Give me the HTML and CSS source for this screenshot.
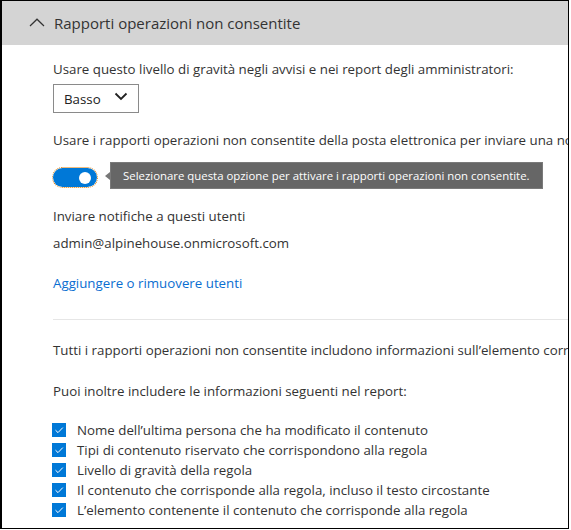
FILE: index.html
```html
<!DOCTYPE html>
<html lang="it">
<head>
<meta charset="utf-8">
<link rel="stylesheet" href="styles.css">
</head>
<body>
<div class="frame">
  <div class="header">
    <svg class="chev-up" width="16" height="9" viewBox="0 0 16 9"><path d="M1 8 L8 1.2 L15 8" fill="none" stroke="#333" stroke-width="1.2"/></svg>
    <span class="title">Rapporti operazioni non consentite</span>
  </div>
  <div class="content">
    <p class="line l1">Usare questo livello di gravità negli avvisi e nei report degli amministratori:</p>
    <div class="select">
      <span>Basso</span>
      <svg width="14" height="9" viewBox="0 0 14 9"><path d="M1.5 1.5 L7 7 L12.5 1.5" fill="none" stroke="#222" stroke-width="1.8"/></svg>
    </div>
    <p class="line l2">Usare i rapporti operazioni non consentite della posta elettronica per inviare una notifica agli amministratori</p>
    <div class="toggle-row">
      <div class="toggle"><span class="knob"></span></div>
      <div class="tooltip">Selezionare questa opzione per attivare i rapporti operazioni non consentite.</div>
    </div>
    <p class="line l3">Inviare notifiche a questi utenti</p>
    <p class="line l4">admin@alpinehouse.onmicrosoft.com</p>
    <p class="line l5"><a class="link" href="#">Aggiungere o rimuovere utenti</a></p>
    <div class="sep"></div>
    <p class="line l6">Tutti i rapporti operazioni non consentite includono informazioni sull’elemento corrispondente</p>
    <p class="line l7">Puoi inoltre includere le informazioni seguenti nel report:</p>
    <ul class="checks">
      <li><span class="cb"><svg width="14" height="14" viewBox="0 0 14 14"><path d="M3.5 7.2 L6 9.6 L10.8 4.6" fill="none" stroke="#fff" stroke-width="1"/></svg></span>Nome dell’ultima persona che ha modificato il contenuto</li>
      <li><span class="cb"><svg width="14" height="14" viewBox="0 0 14 14"><path d="M3.5 7.2 L6 9.6 L10.8 4.6" fill="none" stroke="#fff" stroke-width="1"/></svg></span>Tipi di contenuto riservato che corrispondono alla regola</li>
      <li><span class="cb"><svg width="14" height="14" viewBox="0 0 14 14"><path d="M3.5 7.2 L6 9.6 L10.8 4.6" fill="none" stroke="#fff" stroke-width="1"/></svg></span>Livello di gravità della regola</li>
      <li><span class="cb"><svg width="14" height="14" viewBox="0 0 14 14"><path d="M3.5 7.2 L6 9.6 L10.8 4.6" fill="none" stroke="#fff" stroke-width="1"/></svg></span>Il contenuto che corrisponde alla regola, incluso il testo circostante</li>
      <li><span class="cb"><svg width="14" height="14" viewBox="0 0 14 14"><path d="M3.5 7.2 L6 9.6 L10.8 4.6" fill="none" stroke="#fff" stroke-width="1"/></svg></span>L’elemento contenente il contenuto che corrisponde alla regola</li>
    </ul>
  </div>
</div>
</body>
</html>
```
FILE: styles.css
```css
html, body {
  margin: 0;
  padding: 0;
  background: #fff;
}
body {
  font-family: "Open Sans", "Noto Sans", sans-serif;
  color: #333;
  font-size: 13.3px;
}
.frame {
  width: 566px;
  height: 527px;
  border: 1px solid #000;
  border-left-width: 2px;
  overflow: hidden;
  position: relative;
}
.header {
  height: 44px;
  background: #d4d4d4;
  display: flex;
  align-items: center;
  padding-left: 27px;
}
.chev-up {
  margin-right: 9px;
  margin-top: -2px;
}
.title {
  font-size: 15px;
  color: #333;
}
.content {
  padding-left: 51px;
}
.line {
  margin: 0;
  line-height: 20px;
  white-space: nowrap;
}
.l1 { margin-top: 14px; }
.select {
  margin-top: 5px;
  height: 27px;
  border: 1px solid #8a8a8a;
  display: flex;
  align-items: center;
  justify-content: space-between;
  padding: 0 10px 0 10px;
  box-sizing: content-box;
  width: 64px;
  color: #222;
}
.select svg { margin-top: -4px; }
.l2 { margin-top: 17px; }
.toggle-row {
  margin-top: 12px;
  display: flex;
  align-items: flex-start;
  height: 27px;
}
.toggle {
  margin-top: 6px;
  width: 44px;
  height: 19px;
  box-sizing: border-box;
  border-radius: 10px;
  background: #0078d7;
  outline: 1px dotted #e07b00;
  display: flex;
  align-items: center;
  justify-content: flex-end;
  padding-right: 6px;
  flex: none;
}
.knob {
  width: 12px;
  height: 12px;
  border-radius: 50%;
  background: #fff;
}
.tooltip {
  position: relative;
  margin-left: 13px;
  height: 27px;
  box-sizing: border-box;
  background: #666;
  border: 1px solid #7a7a7a;
  color: #fff;
  font-size: 11.4px;
  line-height: 25px;
  padding: 0 12px;
  white-space: nowrap;
  width: 433px;
  flex: none;
}
.tooltip::before {
  content: "";
  position: absolute;
  left: -6px;
  top: 9px;
  border-style: solid;
  border-width: 4px 5px 4px 0;
  border-color: transparent #777 transparent transparent;
}
.l3 { margin-top: 17px; }
.l4 { margin-top: 7px; }
.l5 { margin-top: 20px; }
.link {
  color: #0a6ed1;
  text-decoration: none;
}
.sep {
  margin-top: 26px;
  height: 1px;
  background: #e6e6e6;
}
.l6 { margin-top: 20px; }
.l7 { margin-top: 21px; }
.checks {
  list-style: none;
  margin: 19px 0 0 0;
  padding: 0;
}
.checks li {
  display: flex;
  align-items: center;
  height: 20px;
  white-space: nowrap;
}
.cb {
  width: 14px;
  height: 14px;
  background: #0078d7;
  margin-left: -1px;
  margin-right: 11px;
  display: flex;
  flex: none;
}
```
